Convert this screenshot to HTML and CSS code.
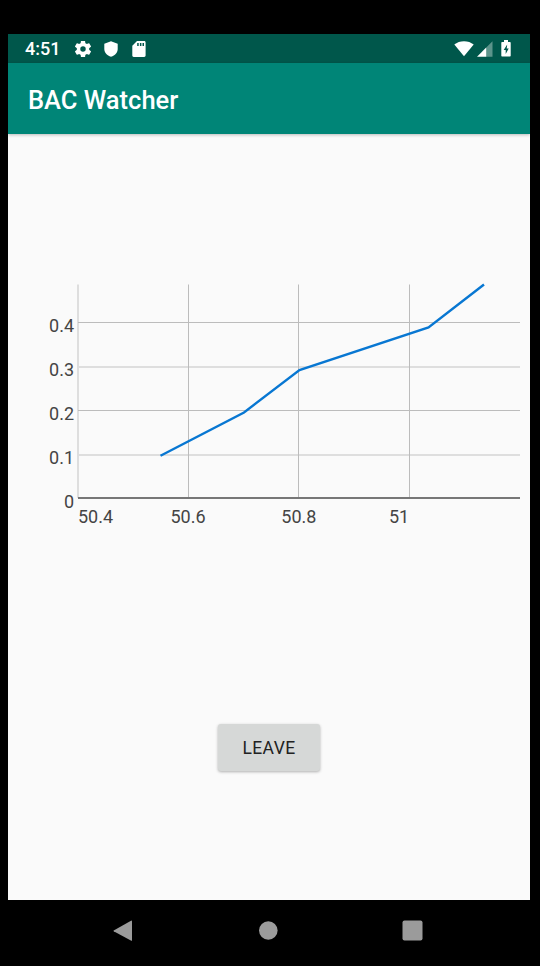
FILE: index.html
```
<!DOCTYPE html>
<html lang="en">
<head>
    <meta charset="utf-8">
    <title>BAC Watcher</title>
    <link rel="stylesheet" href="styles.css">
</head>
<body>
    <div class="screen">
        <div class="status-bar">
            <span class="clock">4:51</span>
            <svg class="icon-gear" width="16" height="16" viewBox="2.3 2.3 19.4 19.4">
                <path fill-rule="evenodd" d="M19.43 12.98c.04-.32.07-.64.07-.98s-.03-.66-.07-.98l2.11-1.65c.19-.15.24-.42.12-.64l-2-3.46c-.12-.22-.39-.3-.61-.22l-2.49 1c-.52-.4-1.08-.73-1.69-.98l-.38-2.65C14.46 2.18 14.25 2 14 2h-4c-.25 0-.46.18-.49.42l-.38 2.65c-.61.25-1.17.59-1.69.98l-2.49-1c-.23-.09-.49 0-.61.22l-2 3.46c-.13.22-.07.49.12.64l2.11 1.65c-.04.32-.07.65-.07.98s.03.66.07.98l-2.11 1.65c-.19.15-.24.42-.12.64l2 3.46c.12.22.39.3.61.22l2.49-1c.52.4 1.08.73 1.69.98l.38 2.65c.03.24.24.42.49.42h4c.25 0 .46-.18.49-.42l.38-2.65c.61-.25 1.17-.59 1.69-.98l2.49 1c.23.09.49 0 .61-.22l2-3.46c.12-.22.07-.49-.12-.64l-2.11-1.65zM12 15.3a3.3 3.3 0 1 1 0-6.6 3.3 3.3 0 0 1 0 6.6z"/>
            </svg>
            <svg class="icon-shield" width="14" height="16" viewBox="0 0 14 16">
                <path d="M7 .2L13.700 2.700v5c0 3.900-2.700 6.900-6.700 8.100C3 14.700.3 11.700.3 7.800v-5.100z"/>
            </svg>
            <svg class="icon-sd" width="14" height="16" viewBox="0 0 14 16">
                <path fill-rule="evenodd" d="M5 0h7.200c.8 0 1.400.6 1.400 1.400v13.200c0 .8-.6 1.400-1.400 1.400H1.700C.9 16 .3 15.400.3 14.600V4.800zM5.200 2v3h1.500V2zM7.900 2v3h1.500V2zM10.500 2v3H12V2z"/>
            </svg>
            <span class="spacer"></span>
            <svg class="icon-wifi" width="20" height="16" viewBox="0 0 20 16">
                <path d="M10 15.300L.3 3.600C3 1.400 6.300.2 10 .2s7 1.200 9.700 3.400z"/>
            </svg>
            <svg class="icon-signal" width="16" height="16" viewBox="0 0 16 16">
                <path class="faint" d="M9 6.700L15.500.2V15.800H9z"/>
                <path d="M0 15.800L9.200 6.600V15.800z"/>
            </svg>
            <svg class="icon-battery" width="10" height="17" viewBox="0 0 10 17">
                <path fill-rule="evenodd" d="M3 0h4v2h1.700c.6 0 1 .4 1 1v12.600c0 .6-.4 1-1 1H1.300c-.6 0-1-.4-1-1V3c0-.6.400-1 1-1H3zM6.200 4.500L2.700 10h2v4l3-5.600h-2z"/>
            </svg>
        </div>

        <div class="app-bar">
            <h1>BAC Watcher</h1>
        </div>

        <div class="content">
            <svg class="chart" width="522" height="265" viewBox="8 270 522 265">
                <g class="grid soft">
                    <line x1="78" y1="284.500" x2="78" y2="498"/>
                    <line x1="78" y1="367" x2="520" y2="367"/>
                    <line x1="78" y1="455" x2="520" y2="455"/>
                </g>
                <g class="grid">
                    <line x1="188.500" y1="284.500" x2="188.500" y2="498"/>
                    <line x1="298.500" y1="284.500" x2="298.500" y2="498"/>
                    <line x1="409.500" y1="284.500" x2="409.500" y2="498"/>
                    <line x1="78" y1="322.500" x2="520" y2="322.500"/>
                    <line x1="78" y1="410.500" x2="520" y2="410.500"/>
                </g>
                <line class="axis" x1="78" y1="498" x2="520" y2="498"/>
                <polyline class="series" points="160.500,455.700 244,412.500 299.500,370 428.500,327.500 484,284.500"/>
                <g class="labels y-labels">
                    <text x="74" y="332">0.4</text>
                    <text x="74" y="376">0.3</text>
                    <text x="74" y="420">0.2</text>
                    <text x="74" y="464">0.1</text>
                    <text x="74" y="507.500">0</text>
                </g>
                <g class="labels">
                    <text x="78" y="522.500">50.4</text>
                    <text x="170.500" y="522.500">50.6</text>
                    <text x="281.300" y="522.500">50.8</text>
                    <text x="389" y="522.500">51</text>
                </g>
            </svg>
            <button class="leave-button" type="button">LEAVE</button>
        </div>
    </div>

    <div class="nav-bar">
        <svg width="20" height="22" viewBox="0 0 20 22">
            <path d="M18.500.5q.5 0 .5.800V20.200q0 .8-.7.500L.7 11.200q-.5-.4 0-.8L18 .7z"/>
        </svg>
        <svg width="20" height="22" viewBox="0 0 20 22">
            <circle cx="10.300" cy="10.500" r="9.300"/>
        </svg>
        <svg width="21" height="22" viewBox="0 0 21 22">
            <rect x=".5" y=".5" width="20" height="20" rx="2"/>
        </svg>
    </div>
</body>
</html>
```
FILE: styles.css
```
body {
    margin: 0;
    padding: 34px 10px 0 8px;
    height: 966px;
    box-sizing: border-box;
    background: #000;
    font-family: Roboto, sans-serif;
    overflow: hidden;
}

.screen {
    display: flex;
    flex-direction: column;
    height: 866px;
    background: #fafafa;
}

.status-bar {
    display: flex;
    align-items: center;
    height: 29px;
    padding: 0 19px 0 17px;
    background: #00574b;
    color: #fff;
}

.status-bar svg {
    fill: #fff;
}

.clock {
    width: 50px;
    font-size: 18px;
    font-weight: 500;
}

.icon-shield {
    margin-left: 13px;
}

.icon-sd {
    margin-left: 14px;
}

.spacer {
    flex: 1;
}

.icon-signal {
    margin-left: 3px;
}

.icon-signal .faint {
    fill: #5c948b;
}

.icon-battery {
    margin-left: 8px;
}

.app-bar {
    display: flex;
    align-items: center;
    height: 71px;
    padding-left: 20px;
    background: #008577;
    box-shadow: 0 1px 3px rgba(0, 0, 0, 0.25);
}

.app-bar h1 {
    margin: 0;
    padding-top: 3px;
    color: #fff;
    font-size: 25.5px;
    font-weight: 500;
}

.content {
    display: flex;
    flex: 1;
    flex-direction: column;
    align-items: center;
    padding-top: 136px;
}

.chart {
    display: block;
}

.grid line {
    stroke: #bcbcbc;
    stroke-width: 1;
}

.grid.soft line {
    stroke: #dedede;
    stroke-width: 2;
}

.axis {
    stroke: #777;
    stroke-width: 2;
}

.series {
    fill: none;
    stroke: #0877d2;
    stroke-width: 2.4;
}

.labels text {
    fill: #444;
    font-size: 18px;
}

.y-labels text {
    text-anchor: end;
}

.leave-button {
    width: 102px;
    height: 47px;
    margin-top: 189px;
    padding: 0;
    border: none;
    border-radius: 3px;
    background: #d6d8d7;
    box-shadow: 0 1px 3px rgba(0, 0, 0, 0.3);
    color: #222;
    font-family: inherit;
    font-size: 17.5px;
    letter-spacing: 0.4px;
}

.nav-bar {
    display: flex;
    align-items: center;
    justify-content: space-between;
    height: 61px;
    padding: 0 107px 0 105px;
}

.nav-bar svg {
    fill: #9b9b9b;
}
```
